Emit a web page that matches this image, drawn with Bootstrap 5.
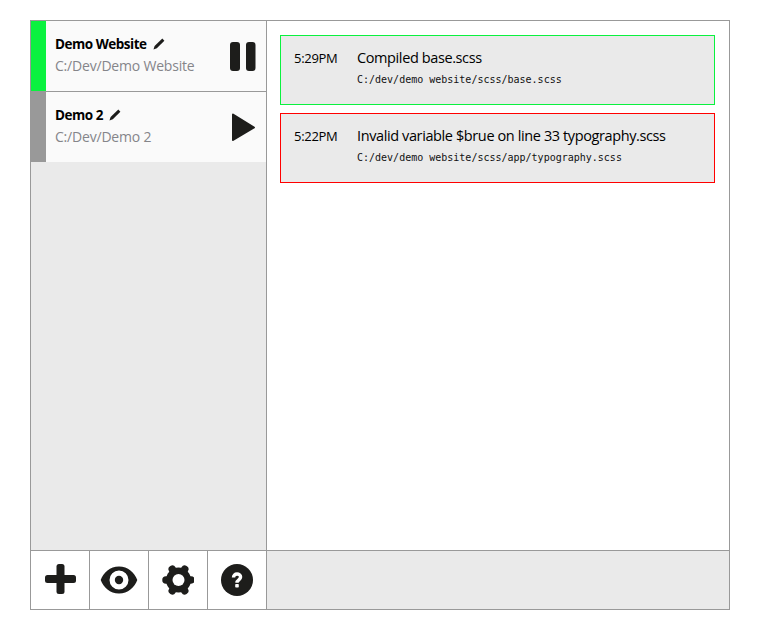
<!DOCTYPE html>
<html lang="en">
<head>
  <meta charset="UTF-8">
  <meta name="viewport" content="width=device-width, initial-scale=1.0">
  <link rel="stylesheet" href="https://cdn.jsdelivr.net/npm/bootstrap@5.3.2/dist/css/bootstrap.min.css">
  <title>Sass compiler</title>
  <style>
    body { background: #fff; color: #000; font-family: "Open Sans", "Noto Sans", sans-serif; }
    .app-frame { width: 700px; height: 590px; margin: 20px 0 0 30px; border: 1px solid #999; }
    .app-main { height: 529px; }
    .side-pane { width: 236px; background: #eaeaea; border-right: 1px solid #999; }
    .project-row { height: 71px; background: #fafafa; border-bottom: 1px solid #999; }
    .project-row:last-child { height: 70px; border-bottom: 0; }
    .status-strip { width: 15px; }
    .strip-on { background: #0af23f; }
    .strip-off { background: #999; }
    .project-body { padding: 14px 5px 0 9px; }
    .project-name { font-size: 13.5px; font-weight: 700; line-height: 18px; letter-spacing: -.48px; }
    .project-path { font-size: 14px; line-height: 18px; margin-top: 4px; color: #85858a; letter-spacing: -.2px; }
    .pencil { margin-left: 3px; vertical-align: -1px; }
    .run-btn { width: 41px; padding: 21px 0 0 5px; }
    .log-pane { padding: 14px 14px 0 13px; }
    .log-entry { height: 70px; margin-bottom: 8px; padding: 13px 13px 0 13px; background: #eaeaea; border: 1px solid; }
    .log-ok { border-color: #0af23f; }
    .log-err { border-color: #f00; }
    .log-time { width: 63px; font-size: 13px; line-height: 18px; letter-spacing: -.3px; }
    .log-title { font-size: 14.5px; line-height: 18px; letter-spacing: -.39px; }
    .log-path { font-family: "DejaVu Sans Mono", monospace; font-size: 10px; line-height: 14px; margin-top: 6px; color: #111; }
    .app-foot { height: 59px; border-top: 1px solid #999; }
    .tool-set { width: 236px; background: #fff; border-right: 1px solid #999; }
    .tool-btn { width: 59px; border-right: 1px solid #999; }
    .tool-btn:last-child { width: 58px; border-right: 0; }
    .foot-fill { background: #eaeaea; }
  </style>
</head>
<body>

  <div class="app-frame d-flex flex-column">
    <div class="app-main d-flex">
      <div class="side-pane flex-shrink-0">
        <div class="project-row d-flex">
          <div class="status-strip strip-on"></div>
          <div class="project-body flex-grow-1">
            <div class="project-name">Demo Website
              <svg class="pencil" width="12" height="12" viewBox="0 0 12 12"><path fill="#1d1d1b" d="M9.300.6l2.100 2.100-7.600 7.600-3.300 1.100 1.100-3.300z"/></svg>
            </div>
            <div class="project-path">C:/Dev/Demo Website</div>
          </div>
          <div class="run-btn">
            <svg class="d-block" width="26" height="29" viewBox="0 0 26 29"><rect x="0" y="0" width="10" height="29" rx="3" fill="#1d1d1b"/><rect x="16" y="0" width="9.500" height="29" rx="3" fill="#1d1d1b"/></svg>
          </div>
        </div>
        <div class="project-row d-flex">
          <div class="status-strip strip-off"></div>
          <div class="project-body flex-grow-1">
            <div class="project-name">Demo 2
              <svg class="pencil" width="12" height="12" viewBox="0 0 12 12"><path fill="#1d1d1b" d="M9.300.6l2.100 2.100-7.600 7.600-3.300 1.100 1.100-3.300z"/></svg>
            </div>
            <div class="project-path">C:/Dev/Demo 2</div>
          </div>
          <div class="run-btn">
            <svg class="d-block" width="26" height="29" viewBox="0 0 26 29"><path fill="#1d1d1b" stroke="#1d1d1b" stroke-width="2" stroke-linejoin="round" d="M3 1.500L24 14.500 3 27z"/></svg>
          </div>
        </div>
      </div>
      <div class="log-pane flex-grow-1 bg-white">
        <div class="log-entry log-ok d-flex">
          <div class="log-time">5:29PM</div>
          <div>
            <div class="log-title">Compiled base.scss</div>
            <div class="log-path">C:/dev/demo website/scss/base.scss</div>
          </div>
        </div>
        <div class="log-entry log-err d-flex">
          <div class="log-time">5:22PM</div>
          <div>
            <div class="log-title">Invalid variable $brue on line 33 typography.scss</div>
            <div class="log-path">C:/dev/demo website/scss/app/typography.scss</div>
          </div>
        </div>
      </div>
    </div>
    <div class="app-foot d-flex">
      <div class="tool-set d-flex flex-shrink-0">
        <div class="tool-btn d-flex align-items-center justify-content-center">
          <svg width="32" height="32" viewBox="0 0 32 32"><rect x="1" y="11" width="31" height="8" rx="2.500" fill="#1d1d1b"/><rect x="12.500" y="0" width="8" height="30" rx="2.500" fill="#1d1d1b"/></svg>
        </div>
        <div class="tool-btn d-flex align-items-center justify-content-center">
          <svg width="38" height="28" viewBox="0 0 38 28"><path fill="#1d1d1b" fill-rule="evenodd" d="M19 .5c9 0 15.500 6 18.300 13.500C34.500 21.500 28 27.500 19 27.500S3.500 21.500.7 14C3.500 6.500 10 .5 19 .5zm0 4a9.500 9.500 0 1 0 0 19 9.500 9.500 0 0 0 0-19z"/><circle cx="19" cy="14" r="4.200" fill="#1d1d1b"/></svg>
        </div>
        <div class="tool-btn d-flex align-items-center justify-content-center">
          <svg width="32" height="32" viewBox="0 0 32 32"><circle cx="16.500" cy="16" r="12.500" fill="#1d1d1b"/><path fill="none" stroke="#1d1d1b" stroke-width="7.500" stroke-linecap="round" d="M4 16h25M10.250 5.200l12.500 21.600M22.750 5.200L10.250 26.800"/><circle cx="16.500" cy="16" r="6" fill="#fff"/></svg>
        </div>
        <div class="tool-btn d-flex align-items-center justify-content-center">
          <svg width="32" height="32" viewBox="0 0 32 32"><circle cx="16" cy="16" r="16" fill="#1d1d1b"/><path fill="none" stroke="#fff" stroke-width="3.400" d="M12.500 13.500c0-2.300 1.600-3.500 3.500-3.500s3.600 1.100 3.600 3.100c0 2.800-3.600 2.600-3.600 5.600"/><rect x="14.200" y="20" width="3.600" height="3.600" rx=".8" fill="#fff"/></svg>
        </div>
      </div>
      <div class="foot-fill flex-grow-1"></div>
    </div>
  </div>

  <script src="https://cdn.jsdelivr.net/npm/bootstrap@5.3.2/dist/js/bootstrap.bundle.min.js"></script>
</body>
</html>
